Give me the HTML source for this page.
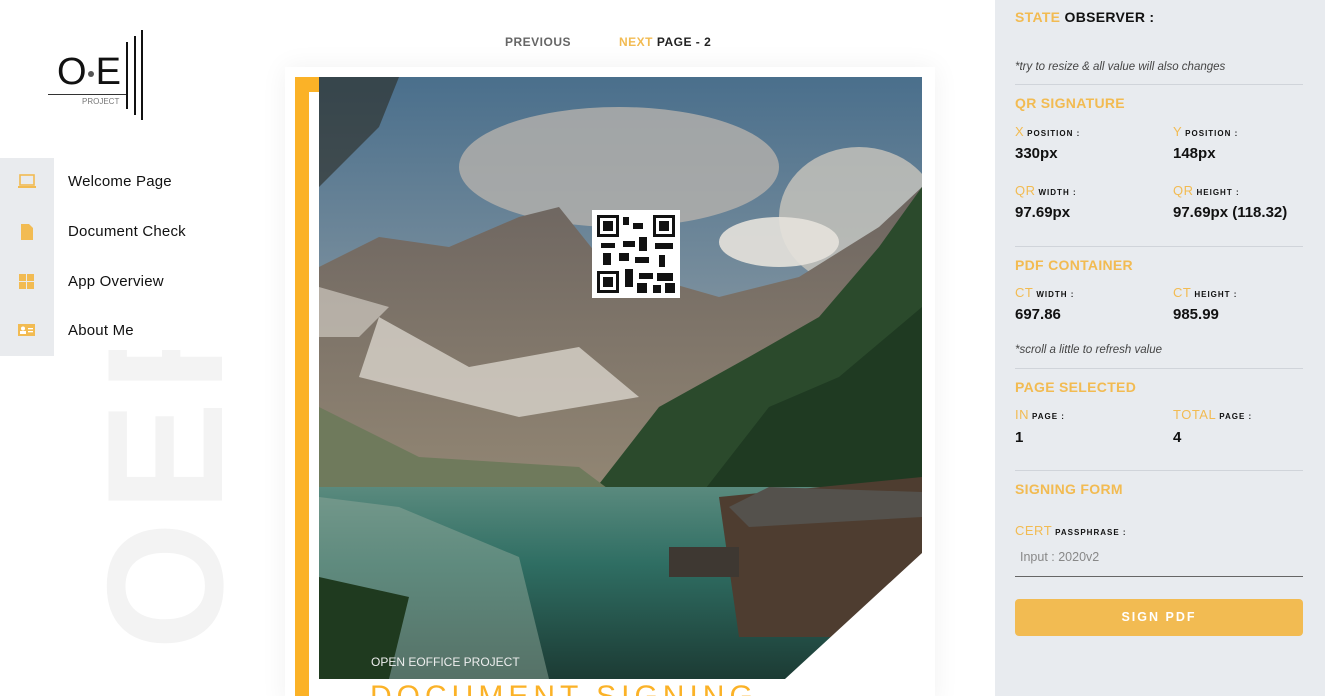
<!DOCTYPE html>
<html style="width:1325px;height:696px;overflow:hidden"><head><meta charset="utf-8"><style>
*{margin:0;padding:0;box-sizing:border-box}
body{width:1325px;height:696px;overflow:hidden;background:#fff;font-family:"Liberation Sans",sans-serif;position:relative}
.a{position:absolute}
.menu{left:68px;font-size:15px;color:#111;letter-spacing:.2px}
.rp{left:995px;top:0;width:330px;height:696px;background:#e8ebef}
.o{color:#f2bb52}
.h{position:absolute;left:20px;font-size:14px;font-weight:bold;color:#f2bb52;letter-spacing:.3px}
.l{position:absolute;font-size:13px;color:#f2bb52;letter-spacing:.5px}
.l b{font-size:8px;color:#111;letter-spacing:1px;margin-left:3px}
.v{position:absolute;font-size:15px;font-weight:bold;color:#111}
.hr{position:absolute;left:20px;width:288px;height:1px;background:#d0d4da}
.it{position:absolute;left:20px;font-size:11.5px;font-style:italic;color:#444}
</style></head><body>
<div class="a" style="left:0;top:0;width:1325px;height:696px;overflow:hidden">
<div class="a" style="left:57px;top:52px;font-size:38px;color:#111;letter-spacing:-1px;line-height:40px">O<span style="display:inline-block;width:6px;height:6px;background:#555;border-radius:50%;vertical-align:middle;margin:0 2px"></span>E</div>
<div class="a" style="left:48px;top:94px;width:79px;height:1px;background:#333"></div>
<div class="a" style="left:82px;top:97px;font-size:8px;color:#777">PROJECT</div>
<div class="a" style="left:126px;top:42px;width:2px;height:67px;background:#111"></div>
<div class="a" style="left:134px;top:36px;width:2px;height:79px;background:#111"></div>
<div class="a" style="left:141px;top:30px;width:2px;height:90px;background:#111"></div>
<div class="a" style="left:105px;top:650px;transform-origin:0 0;transform:rotate(-90deg);font-size:165px;font-weight:bold;color:#f3f3f3;letter-spacing:10px;line-height:120px;width:300px;height:120px;overflow:hidden">OEF</div>
<div class="a" style="left:0;top:158px;width:54px;height:198px;background:#e9ebee"></div>
<svg class="a" style="left:17px;top:174px" width="20" height="16"><rect x="3" y="1" width="14" height="10" fill="none" stroke="#f2bb52" stroke-width="1.6"/><rect x="1" y="12" width="18" height="2" fill="#f2bb52"/></svg>
<svg class="a" style="left:21px;top:224px" width="12" height="16"><path d="M0 0h8l4 4v12H0z" fill="#f2bb52"/></svg>
<svg class="a" style="left:19px;top:274px" width="16" height="16"><rect x="0" y="0" width="7" height="7" fill="#f2bb52"/><rect x="8" y="0" width="7" height="7" fill="#f2bb52"/><rect x="0" y="8" width="7" height="7" fill="#f2bb52"/><rect x="8" y="8" width="7" height="7" fill="#f2bb52"/></svg>
<svg class="a" style="left:18px;top:324px" width="18" height="14"><rect width="17" height="12" fill="#f2bb52"/><circle cx="5" cy="4.5" r="2" fill="#fff"/><rect x="2" y="7" width="6" height="3" fill="#fff"/><rect x="10" y="4" width="5" height="1.3" fill="#fff"/><rect x="10" y="7" width="5" height="1.3" fill="#fff"/></svg>
<div class="a menu" style="top:173px">Welcome Page</div>
<div class="a menu" style="top:223px">Document Check</div>
<div class="a menu" style="top:273px">App Overview</div>
<div class="a menu" style="top:322px">About Me</div>
<div class="a" style="left:505px;top:35px;font-size:12px;font-weight:bold;color:#666;letter-spacing:.5px">PREVIOUS</div>
<div class="a" style="left:619px;top:35px;font-size:12px;font-weight:bold;color:#222;letter-spacing:.5px"><span class="o">NEXT</span> PAGE - 2</div>
<div class="a" style="left:285px;top:67px;width:650px;height:640px;box-shadow:0 0 25px rgba(0,0,0,.06);background:#fff"></div>
<div class="a" style="left:295px;top:77px;width:14px;height:619px;background:#fbb227"></div>
<div class="a" style="left:295px;top:77px;width:24px;height:15px;background:#fbb227"></div>
<svg class="a" style="left:319px;top:77px" width="603" height="602" viewBox="0 0 603 602">
<defs>
<linearGradient id="sky" x1="0" y1="0" x2="0" y2="1"><stop offset="0" stop-color="#4a6f8c"/><stop offset=".5" stop-color="#8b9aa3"/><stop offset="1" stop-color="#9aa3a6"/></linearGradient>
<linearGradient id="lake" x1="0" y1="0" x2="0" y2="1"><stop offset="0" stop-color="#5a8a7e"/><stop offset=".4" stop-color="#2f6e63"/><stop offset="1" stop-color="#1c3b34"/></linearGradient>
<linearGradient id="mt" x1="0" y1="0" x2="0" y2="1"><stop offset="0" stop-color="#6d6560"/><stop offset="1" stop-color="#938774"/></linearGradient>
</defs>
<rect width="603" height="602" fill="url(#sky)"/>
<ellipse cx="300" cy="90" rx="160" ry="60" fill="#b5b2ad" opacity=".8"/>
<ellipse cx="540" cy="140" rx="80" ry="70" fill="#c9c5bd" opacity=".8"/>
<ellipse cx="460" cy="165" rx="60" ry="25" fill="#e5e2dc" opacity=".9"/>
<polygon points="0,190 60,160 130,170 200,140 240,130 280,180 330,200 400,220 480,200 560,150 603,110 603,420 0,420" fill="url(#mt)"/>
<polygon points="60,240 150,290 260,270 320,320 200,340 40,300" fill="#d8d3cb" opacity=".8"/>
<polygon points="0,210 70,230 40,260 0,260" fill="#cfc9c1" opacity=".7"/>
<polygon points="270,420 340,330 430,280 500,240 560,170 603,110 603,420" fill="#2b4a2c"/>
<polygon points="380,420 450,330 520,300 603,230 603,420" fill="#1f3a22"/>
<polygon points="0,330 100,380 260,390 300,420 0,420" fill="#6f7a5c"/>
<rect y="410" width="603" height="192" fill="url(#lake)"/>
<polygon points="0,420 80,430 200,480 230,602 0,602" fill="#8fa89a" opacity=".5"/>
<polygon points="0,500 90,520 70,602 0,602" fill="#1f3a1f"/>
<polygon points="400,420 603,400 603,480 540,560 420,560" fill="#4e3d30"/>
<polygon points="410,430 450,410 603,415 603,440 430,450" fill="#54514c"/>
<rect x="350" y="470" width="70" height="30" fill="#3e3832"/>
<polygon points="0,0 80,0 60,50 20,90 0,110" fill="#2a2a22" opacity=".6"/>
<polygon points="603,476 603,602 466,602" fill="#fff"/>
<rect x="273" y="133" width="88" height="88" fill="#fff"/>
<g fill="#111">
<rect x="278" y="138" width="22" height="22"/><rect x="334" y="138" width="22" height="22"/><rect x="278" y="194" width="22" height="22"/>
<rect x="304" y="140" width="6" height="8"/><rect x="314" y="146" width="10" height="6"/><rect x="304" y="164" width="12" height="6"/><rect x="320" y="160" width="8" height="14"/><rect x="282" y="166" width="14" height="5"/><rect x="300" y="176" width="10" height="8"/><rect x="336" y="166" width="18" height="6"/><rect x="316" y="180" width="14" height="6"/><rect x="340" y="178" width="6" height="12"/><rect x="306" y="192" width="8" height="18"/><rect x="320" y="196" width="14" height="6"/><rect x="338" y="196" width="16" height="8"/><rect x="318" y="206" width="10" height="10"/><rect x="334" y="208" width="8" height="8"/><rect x="346" y="206" width="10" height="10"/><rect x="284" y="176" width="8" height="12"/>
</g>
<g fill="#fff"><rect x="281" y="141" width="16" height="16"/><rect x="337" y="141" width="16" height="16"/><rect x="281" y="197" width="16" height="16"/></g>
<g fill="#111"><rect x="284" y="144" width="10" height="10"/><rect x="340" y="144" width="10" height="10"/><rect x="284" y="200" width="10" height="10"/></g>
<text x="52" y="589" font-family="Liberation Sans" font-size="12" fill="#eee">OPEN EOFFICE PROJECT</text>
</svg>
<div class="a" style="left:370px;top:680px;font-size:30px;color:#fbb227;letter-spacing:5px;line-height:34px">DOCUMENT SIGNING</div>
<div class="a rp">
<div class="h" style="top:9px">STATE <span style="color:#111">OBSERVER :</span></div>
<div class="it" style="top:61px">*try to resize &amp; all value will also changes</div>
<div class="hr" style="top:84px"></div>
<div class="h" style="top:95px">QR SIGNATURE</div>
<div class="l" style="left:20px;top:124px">X<b>POSITION :</b></div>
<div class="l" style="left:178px;top:124px">Y<b>POSITION :</b></div>
<div class="v" style="left:20px;top:145px">330px</div>
<div class="v" style="left:178px;top:145px">148px</div>
<div class="l" style="left:20px;top:183px">QR<b>WIDTH :</b></div>
<div class="l" style="left:178px;top:183px">QR<b>HEIGHT :</b></div>
<div class="v" style="left:20px;top:204px">97.69px</div>
<div class="v" style="left:178px;top:204px">97.69px (118.32)</div>
<div class="hr" style="top:246px"></div>
<div class="h" style="top:257px">PDF CONTAINER</div>
<div class="l" style="left:20px;top:285px">CT<b>WIDTH :</b></div>
<div class="l" style="left:178px;top:285px">CT<b>HEIGHT :</b></div>
<div class="v" style="left:20px;top:306px">697.86</div>
<div class="v" style="left:178px;top:306px">985.99</div>
<div class="it" style="top:344px">*scroll a little to refresh value</div>
<div class="hr" style="top:368px"></div>
<div class="h" style="top:379px">PAGE SELECTED</div>
<div class="l" style="left:20px;top:407px">IN<b>PAGE :</b></div>
<div class="l" style="left:178px;top:407px">TOTAL<b>PAGE :</b></div>
<div class="v" style="left:20px;top:429px">1</div>
<div class="v" style="left:178px;top:429px">4</div>
<div class="hr" style="top:470px"></div>
<div class="h" style="top:481px">SIGNING FORM</div>
<div class="l" style="left:20px;top:523px">CERT<b>PASSPHRASE :</b></div>
<div class="a" style="left:25px;top:550px;font-size:12.5px;color:#888">Input : 2020v2</div>
<div class="a" style="left:20px;top:576px;width:288px;height:1px;background:#666"></div>
<div class="a" style="left:20px;top:599px;width:288px;height:37px;background:#f2bb52;border-radius:4px;color:#fff;font-weight:bold;font-size:12.5px;letter-spacing:2px;text-align:center;line-height:37px">SIGN PDF</div>
</div>
</div>
</body></html>
